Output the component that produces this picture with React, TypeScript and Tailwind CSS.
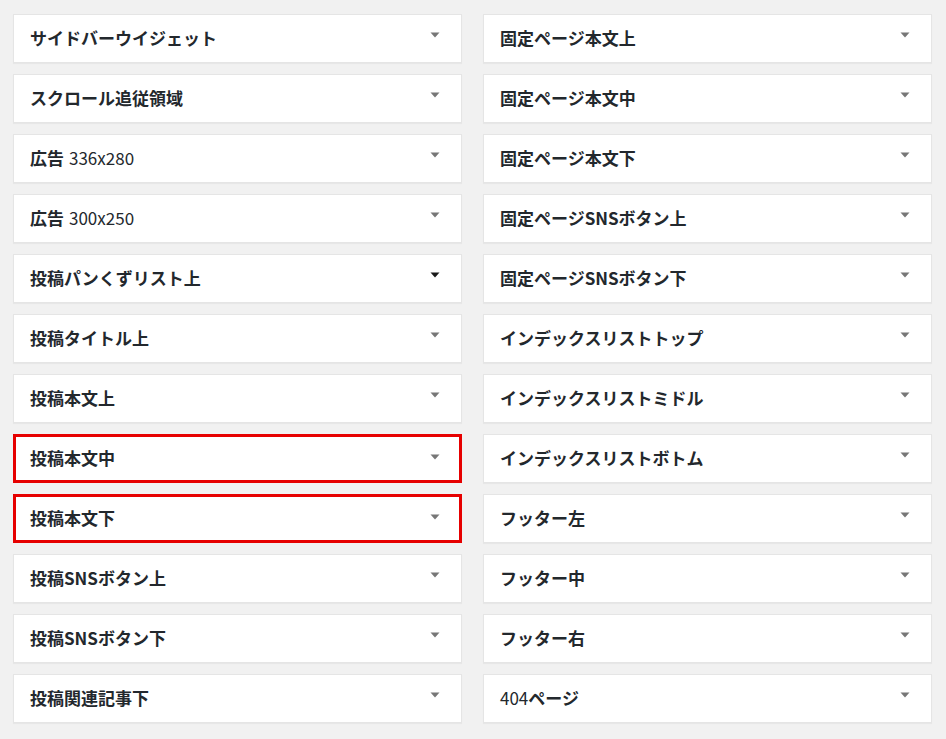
type Area = { label: string; num?: string; after?: string; highlight?: boolean; dark?: boolean }

const left: Area[] = [
  { label: "サイドバーウイジェット" },
  { label: "スクロール追従領域" },
  { label: "広告", num: "336x280" },
  { label: "広告", num: "300x250" },
  { label: "投稿パンくずリスト上", dark: true },
  { label: "投稿タイトル上" },
  { label: "投稿本文上" },
  { label: "投稿本文中", highlight: true },
  { label: "投稿本文下", highlight: true },
  { label: "投稿SNSボタン上" },
  { label: "投稿SNSボタン下" },
  { label: "投稿関連記事下" },
]

const right: Area[] = [
  { label: "固定ページ本文上" },
  { label: "固定ページ本文中" },
  { label: "固定ページ本文下" },
  { label: "固定ページSNSボタン上" },
  { label: "固定ページSNSボタン下" },
  { label: "インデックスリストトップ" },
  { label: "インデックスリストミドル" },
  { label: "インデックスリストボトム" },
  { label: "フッター左" },
  { label: "フッター中" },
  { label: "フッター右" },
  { label: "", num: "404", after: "ページ" },
]

function Arrow({ dark }: { dark?: boolean }) {
  return (
    <svg width="10" height="6" viewBox="0 0 10 6" className="shrink-0">
      <path d="M0.5 0.5 L9.5 0.5 L5 5.5 Z" fill={dark ? "#1a1a1a" : "#777777"} />
    </svg>
  )
}

function WidgetArea({ label, num, after, highlight, dark }: Area) {
  return (
    <div
      className={
        highlight
          ? "h-[49px] bg-white border-[3px] border-[#e60000] flex items-center justify-between pl-[14px] pr-[19px]"
          : "h-[49px] bg-white border border-[#e5e5e5] shadow-[0_1px_1px_rgba(0,0,0,0.04)] flex items-center justify-between pl-[16px] pr-[21px]"
      }
    >
      <h3 className="text-[17px] leading-none text-[#23282d] -mt-[2px]">
        {label && <span className="font-bold">{label}</span>}
        {num && <span className={label ? "font-normal ml-[5px]" : "font-normal"}>{num}</span>}
        {after && <span className="font-bold">{after}</span>}
      </h3>
      <div className="self-start mt-[17px]">
        <Arrow dark={dark} />
      </div>
    </div>
  )
}

export default function App() {
  return (
    <div
      className="w-[946px] h-[739px] bg-[#f1f1f1] pl-[13px] pt-[14px] flex gap-[21px]"
      style={{ fontFamily: '"Noto Sans CJK JP", "Noto Sans", sans-serif' }}
    >
      <div className="w-[449px] flex flex-col gap-[11px]">
        {left.map((w, i) => (
          <WidgetArea key={i} {...w} />
        ))}
      </div>
      <div className="w-[449px] flex flex-col gap-[11px]">
        {right.map((w, i) => (
          <WidgetArea key={i} {...w} />
        ))}
      </div>
    </div>
  )
}
